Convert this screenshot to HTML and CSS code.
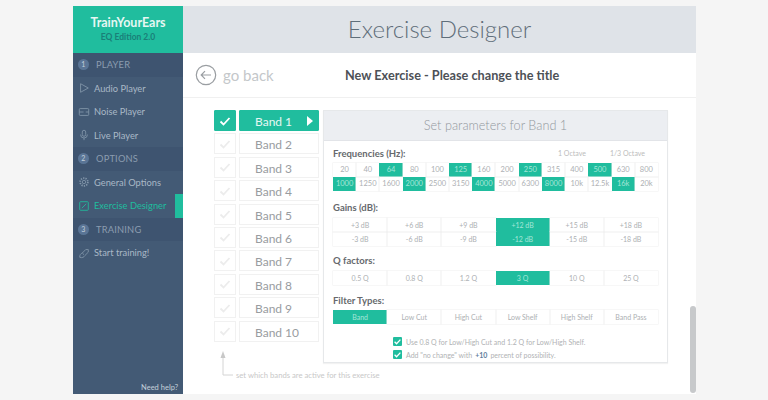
FILE: index.html
```html
<!DOCTYPE html>
<html lang="en">
<head>
  <meta charset="UTF-8" />
  <title>TrainYourEars - Exercise Designer</title>
  <link rel="stylesheet" href="styles.css">
</head>
<body>
  <div class="app">
    <!-- sidebar -->
    <aside class="sidebar">
      <div class="brand">
        <div class="brand-name">TrainYourEars</div>
        <div class="brand-sub">EQ Edition 2.0</div>
      </div>
      <div class="section"><span class="num">1</span>PLAYER</div>
      <div class="item">
        <svg class="ico" viewBox="0 0 14 14"><path d="M3 2l9 5-9 5z"/></svg>Audio Player
      </div>
      <div class="item">
        <svg class="ico" viewBox="0 0 14 14"><rect x="1.5" y="3" width="11" height="8" rx="1"/><path d="M1.5 7h5M9 7h3.5"/></svg>Noise Player
      </div>
      <div class="item">
        <svg class="ico" viewBox="0 0 14 14"><rect x="5" y="1.5" width="4" height="7" rx="2"/><path d="M3 6.5a4 4 0 0 0 8 0M7 10.5V13"/></svg>Live Player
      </div>
      <div class="section"><span class="num">2</span>OPTIONS</div>
      <div class="item">
        <svg class="ico" viewBox="0 0 14 14"><circle cx="7" cy="7" r="2"/><circle cx="7" cy="7" r="4.5" stroke-width="2" stroke-dasharray="1.5 1.3"/></svg>General Options
      </div>
      <div class="item active">
        <svg class="ico" viewBox="0 0 14 14"><rect x="2" y="2" width="10" height="10" rx="1"/><path d="M4.5 9.5l5-5"/></svg>Exercise Designer
      </div>
      <div class="section"><span class="num">3</span>TRAINING</div>
      <div class="item">
        <svg class="ico" viewBox="0 0 14 14"><path d="M2 12c0-3 1-4 3-5l4-4h3v3l-4 4c-1 2-3 3-6 2zM5 7l2 2"/></svg>Start training!
      </div>
      <div class="help">Need help?</div>
    </aside>

    <main class="main">
      <header class="topbar">Exercise Designer</header>
      <div class="subbar">
        <div class="back">
          <svg class="back-ico" viewBox="0 0 22 22"><circle cx="11" cy="11" r="9.7"/><path d="M16 11H6.5M10 7.2L6.2 11l3.8 3.8"/></svg>
          go back
        </div>
        <div class="ex-title">New Exercise - Please change the title</div>
      </div>

      <div class="content">
        <div class="bands">
          <div class="band-row on">
            <span class="tick"><svg viewBox="0 0 14 14"><path d="M2.5 7.5l3 3 6-6.5"/></svg></span>
            <span class="band">Band 1<i class="arrow"></i></span>
          </div>
          <div class="band-row">
            <span class="tick"><svg viewBox="0 0 14 14"><path d="M2.5 7.5l3 3 6-6.5"/></svg></span>
            <span class="band">Band 2</span>
          </div>
          <div class="band-row">
            <span class="tick"><svg viewBox="0 0 14 14"><path d="M2.5 7.5l3 3 6-6.5"/></svg></span>
            <span class="band">Band 3</span>
          </div>
          <div class="band-row">
            <span class="tick"><svg viewBox="0 0 14 14"><path d="M2.5 7.5l3 3 6-6.5"/></svg></span>
            <span class="band">Band 4</span>
          </div>
          <div class="band-row">
            <span class="tick"><svg viewBox="0 0 14 14"><path d="M2.5 7.5l3 3 6-6.5"/></svg></span>
            <span class="band">Band 5</span>
          </div>
          <div class="band-row">
            <span class="tick"><svg viewBox="0 0 14 14"><path d="M2.5 7.5l3 3 6-6.5"/></svg></span>
            <span class="band">Band 6</span>
          </div>
          <div class="band-row">
            <span class="tick"><svg viewBox="0 0 14 14"><path d="M2.5 7.5l3 3 6-6.5"/></svg></span>
            <span class="band">Band 7</span>
          </div>
          <div class="band-row">
            <span class="tick"><svg viewBox="0 0 14 14"><path d="M2.5 7.5l3 3 6-6.5"/></svg></span>
            <span class="band">Band 8</span>
          </div>
          <div class="band-row">
            <span class="tick"><svg viewBox="0 0 14 14"><path d="M2.5 7.5l3 3 6-6.5"/></svg></span>
            <span class="band">Band 9</span>
          </div>
          <div class="band-row">
            <span class="tick"><svg viewBox="0 0 14 14"><path d="M2.5 7.5l3 3 6-6.5"/></svg></span>
            <span class="band">Band 10</span>
          </div>
          <div class="hint">
            <svg class="hint-arrow" viewBox="0 0 14 29"><path class="hint-line" d="M4 6v18h10"/><path class="hint-head" d="M4 0l2.5 7h-5z"/></svg>
            <span>set which bands are active for this exercise</span>
          </div>
        </div>

        <section class="panel">
          <div class="panel-head">Set parameters for Band 1</div>
          <div class="panel-body">
            <div class="label-row">
              <span class="label">Frequencies (Hz):</span>
              <span class="octaves"><span>1 Octave</span><span>1/3 Octave</span></span>
            </div>
            <div class="grid freq">
              <span>20</span><span>40</span><span class="sel">64</span><span>80</span><span>100</span><span class="sel">125</span><span>160</span><span>200</span><span class="sel">250</span><span>315</span><span>400</span><span class="sel">500</span><span>630</span><span>800</span>
              <span class="sel">1000</span><span>1250</span><span>1600</span><span class="sel">2000</span><span>2500</span><span>3150</span><span class="sel">4000</span><span>5000</span><span>6300</span><span class="sel">8000</span><span>10k</span><span>12.5k</span><span class="sel">16k</span><span>20k</span>
            </div>

            <div class="label gains-label">Gains (dB):</div>
            <div class="grid six">
              <span>+3 dB</span><span>+6 dB</span><span>+9 dB</span><span class="sel">+12 dB</span><span>+15 dB</span><span>+18 dB</span>
              <span>-3 dB</span><span>-6 dB</span><span>-9 dB</span><span class="sel">-12 dB</span><span>-15 dB</span><span>-18 dB</span>
            </div>

            <div class="label q-label">Q factors:</div>
            <div class="grid six">
              <span>0.5 Q</span><span>0.8 Q</span><span>1.2 Q</span><span class="sel">3 Q</span><span>10 Q</span><span>25 Q</span>
            </div>

            <div class="label filter-label">Filter Types:</div>
            <div class="grid six">
              <span class="sel">Band</span><span>Low Cut</span><span>High Cut</span><span>Low Shelf</span><span>High Shelf</span><span>Band Pass</span>
            </div>

            <div class="opts">
              <div class="opt"><span class="box"><svg viewBox="0 0 14 14"><path d="M2.5 7.5l3 3 6-6.5"/></svg></span>Use 0.8 Q for Low/High Cut and 1.2 Q for Low/High Shelf.</div>
              <div class="opt"><span class="box"><svg viewBox="0 0 14 14"><path d="M2.5 7.5l3 3 6-6.5"/></svg></span>Add "no change" with <b>+10</b> percent of possibility.</div>
            </div>
          </div>
        </section>
      </div>
      <div class="scrollbar"></div>
    </main>
  </div>
</body>
</html>
```

FILE: styles.css
```css
/* page */
body {
  margin: 0;
  background: #f5f5f5;
  font-family: Lato, "Open Sans", sans-serif;
  color: #555;
  overflow: hidden;
}
.app {
  display: flex;
  width: 623px;
  height: 388px;
  margin: 6px 0 0 73px;
  background: #fff;
}

/* sidebar */
.sidebar {
  width: 110px;
  flex: none;
  display: flex;
  flex-direction: column;
  background: #435a75;
  color: #a9b8c6;
  font-size: 9.3px;
}
.brand {
  height: 47px;
  box-sizing: border-box;
  padding-top: 9px;
  background: #20bd9e;
  text-align: center;
}
.brand-name {
  font-size: 12.5px;
  font-weight: 700;
  line-height: 15px;
  color: #e6f7f3;
}
.brand-sub {
  font-size: 8.5px;
  font-weight: 700;
  line-height: 15px;
  color: #1a7f78;
}
.section, .item {
  height: 23.5px;
  display: flex;
  align-items: center;
  flex: none;
}
.section {
  background: #3e5470;
  color: #8b9caf;
  padding-left: 5px;
  letter-spacing: 0.2px;
}
.num {
  width: 11px;
  height: 11px;
  margin-right: 7px;
  border-radius: 50%;
  background: #5a7596;
  color: #c3cfdb;
  font-size: 7px;
  line-height: 11px;
  text-align: center;
}
.item {
  padding-left: 5px;
}
.ico {
  width: 12px;
  height: 12px;
  margin-right: 4px;
  fill: none;
  stroke: #8296aa;
  stroke-width: 1;
}
.item.active {
  color: #20bd9e;
  box-shadow: inset -8px 0 0 #20bd9e;
}
.item.active .ico {
  stroke: #20bd9e;
}
.help {
  margin-top: auto;
  padding: 0 5px 2px 0;
  text-align: right;
  font-size: 7.5px;
  color: #c4d0da;
}

/* main column */
.main {
  flex: 1;
  position: relative;
  min-width: 0;
}
.topbar {
  height: 47px;
  background: #dfe3e8;
  color: #5f6e7a;
  font-size: 24px;
  font-weight: 300;
  line-height: 46px;
  text-align: center;
}
.subbar {
  height: 45px;
  display: flex;
  align-items: center;
  border-bottom: 1px solid #f0f0f0;
  box-sizing: border-box;
  padding-left: 12px;
}
.back {
  width: 150px;
  display: flex;
  align-items: center;
  gap: 6px;
  font-size: 15px;
  color: #c4c7ca;
}
.back-ico {
  width: 22px;
  height: 22px;
  fill: none;
  stroke: #9a9ea2;
  stroke-width: 1.2;
}
.ex-title {
  font-size: 12.7px;
  font-weight: 700;
  color: #4d5157;
}
.content {
  display: flex;
  gap: 4px;
  padding: 12px 0 0 31px;
}

/* band list */
.bands {
  width: 105px;
  display: flex;
  flex-direction: column;
  gap: 2.4px;
}
.band-row {
  display: flex;
  gap: 3px;
  height: 21px;
}
.tick {
  width: 20px;
  flex: none;
  display: flex;
  align-items: center;
  justify-content: center;
  border: 1px solid #f1f1f1;
}
.tick svg {
  width: 14px;
  height: 14px;
  fill: none;
  stroke: #ececec;
  stroke-width: 1.8;
}
.band {
  flex: 1;
  position: relative;
  padding-left: 15px;
  border: 1px solid #f1f1f1;
  font-size: 12px;
  line-height: 21px;
  color: #999c9f;
}
.on .tick, .on .band {
  background: #20bd9e;
  border-color: #20bd9e;
  color: #e6f7f3;
  border-radius: 1px;
}
.on .tick svg {
  stroke: #fff;
}
.arrow {
  position: absolute;
  right: 5px;
  top: 5px;
  border-left: 6px solid #fff;
  border-top: 5px solid transparent;
  border-bottom: 5px solid transparent;
}
.hint {
  display: flex;
  align-items: flex-end;
  gap: 3px;
  height: 29px;
  margin-top: 7.5px;
  padding-left: 5px;
  font-size: 7.7px;
  line-height: 10px;
  color: #c8c8c8;
  white-space: nowrap;
}
.hint-arrow {
  width: 14px;
  height: 29px;
  flex: none;
}
.hint-line {
  fill: none;
  stroke: #d4d4d4;
}
.hint-head {
  fill: #c8c8c8;
}

/* parameters panel */
.panel {
  width: 345px;
  height: 253px;
  box-sizing: border-box;
  border: 1px solid #e6e8ea;
  box-shadow: 0 1px 1px rgba(0,0,0,0.05);
}
.panel-head {
  height: 29px;
  background: #eceef2;
  border-bottom: 1px solid #e2e4e8;
  color: #93989e;
  font-size: 12.7px;
  font-weight: 300;
  line-height: 29px;
  text-align: center;
}
.panel-body {
  padding: 6px 9px 0;
}
.label {
  font-size: 9.5px;
  font-weight: 700;
  line-height: 14px;
  color: #66696d;
}
.label-row {
  display: flex;
  justify-content: space-between;
  height: 16px;
}
.octaves {
  display: flex;
  gap: 24px;
  padding-right: 13px;
  font-size: 7px;
  line-height: 12px;
  color: #bcbcbc;
}
.grid {
  display: grid;
  grid-auto-rows: 14px;
  font-size: 7px;
  color: #adb0b3;
  text-align: center;
}
.grid span {
  line-height: 14px;
  box-shadow: 0 0 0 0.5px #eeeeee;
}
.grid .sel {
  background: #20bd9e;
  color: #a5e6d8;
  box-shadow: none;
}
.freq {
  grid-template-columns: repeat(14, 1fr);
  font-size: 7.5px;
}
.six {
  grid-template-columns: repeat(6, 1fr);
}
.gains-label { margin: 10px 0 3px; }
.q-label { margin: 8px 0 3px; }
.filter-label { margin: 9px 0 2px; }

/* options under the grids */
.opts {
  margin-top: 11px;
  padding-left: 60px;
  font-size: 7px;
  color: #b0b2b4;
}
.opt {
  display: flex;
  align-items: center;
  height: 13px;
}
.box {
  width: 9px;
  height: 9px;
  margin-right: 4px;
  background: #20bd9e;
  border-radius: 1px;
  display: flex;
}
.box svg {
  fill: none;
  stroke: #fff;
  stroke-width: 2;
}
.opt b {
  margin: 0 3px;
  color: #5f7d9c;
}

.scrollbar {
  position: absolute;
  right: 0;
  top: 300px;
  bottom: 1px;
  width: 6px;
  background: #c7c9cb;
  border-radius: 3px;
}
```
